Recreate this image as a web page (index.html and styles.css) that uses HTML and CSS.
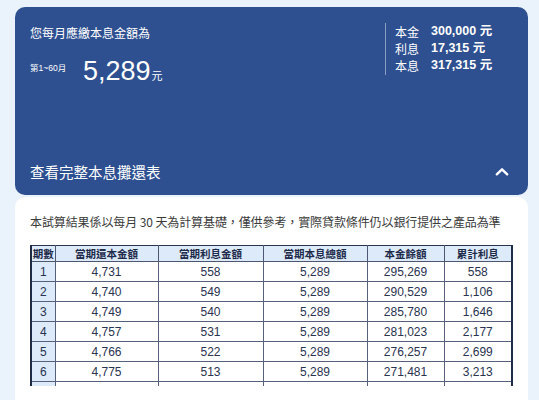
FILE: index.html
```html
<!DOCTYPE html>
<html lang="zh-Hant">
<head>
<meta charset="utf-8">
<link rel="stylesheet" href="styles.css">
</head>
<body>
<div class="page">
  <section class="summary">
    <div class="top">
      <div class="monthly">
        <div class="title">您每月應繳本息金額為</div>
        <div class="amount-row">
          <span class="period">第1~60月</span>
          <span class="amount-group"><span class="amount">5,289</span><span class="unit">元</span></span>
        </div>
      </div>
      <div class="totals">
        <div class="trow"><span class="lbl">本金</span><span class="val">300,000 元</span></div>
        <div class="trow"><span class="lbl">利息</span><span class="val">17,315 元</span></div>
        <div class="trow"><span class="lbl">本息</span><span class="val">317,315 元</span></div>
      </div>
    </div>
    <div class="toggle">
      <span class="toggle-text">查看完整本息攤還表</span>
      <svg class="chev" width="14" height="9" viewBox="0 0 14 9"><path d="M1.8 7.3 L7 2.3 L12.2 7.3" fill="none" stroke="#fff" stroke-width="2.4" stroke-linecap="round" stroke-linejoin="round"/></svg>
    </div>
  </section>
  <section class="detail">
    <p class="note">本試算結果係以每月 30 天為計算基礎，僅供參考，實際貸款條件仍以銀行提供之產品為準</p>
    <div class="table-wrap">
      <table class="sched">
        <colgroup>
          <col class="c1"><col class="c2"><col class="c3"><col class="c4"><col class="c5"><col class="c6">
        </colgroup>
        <thead>
          <tr><th>期數</th><th>當期還本金額</th><th>當期利息金額</th><th>當期本息總額</th><th>本金餘額</th><th>累計利息</th></tr>
        </thead>
        <tbody>
          <tr><td class="no">1</td><td>4,731</td><td>558</td><td>5,289</td><td>295,269</td><td>558</td></tr>
          <tr><td class="no">2</td><td>4,740</td><td>549</td><td>5,289</td><td>290,529</td><td>1,106</td></tr>
          <tr><td class="no">3</td><td>4,749</td><td>540</td><td>5,289</td><td>285,780</td><td>1,646</td></tr>
          <tr><td class="no">4</td><td>4,757</td><td>531</td><td>5,289</td><td>281,023</td><td>2,177</td></tr>
          <tr><td class="no">5</td><td>4,766</td><td>522</td><td>5,289</td><td>276,257</td><td>2,699</td></tr>
          <tr><td class="no">6</td><td>4,775</td><td>513</td><td>5,289</td><td>271,481</td><td>3,213</td></tr>
          <tr><td class="no">7</td><td>4,784</td><td>505</td><td>5,289</td><td>266,697</td><td>3,718</td></tr>
        </tbody>
      </table>
    </div>
  </section>
</div>
</body>
</html>
```
FILE: styles.css
```css
* { box-sizing: border-box; }
html, body { margin: 0; padding: 0; }
body {
  background: #eaf3fc;
  font-family: "Liberation Sans", "Noto Sans CJK TC", sans-serif;
  width: 539px;
  height: 400px;
  overflow: hidden;
}
.page {
  padding: 7px 11px 0 15px;
}
.summary {
  background: #2e5090;
  border-radius: 10px;
  height: 188px;
  padding: 17px 0 0 15px;
  display: flex;
  flex-direction: column;
  color: #fff;
}
.top {
  display: flex;
}
.monthly {
  flex: 1;
}
.title {
  font-size: 12px;
  line-height: 18px;
  font-family: "Noto Sans CJK TC", sans-serif;
}
.amount-row {
  display: flex;
  align-items: flex-start;
  margin-top: 15px;
}
.period {
  font-size: 8.5px;
  line-height: 12px;
  width: 53px;
  margin-top: 5px;
  font-family: "Liberation Sans", "Noto Sans CJK TC", sans-serif;
}
.amount-group {
  display: flex;
  align-items: baseline;
}
.amount {
  font-size: 27px;
  line-height: 28px;
}
.unit {
  font-size: 11px;
  margin-left: 1px;
  font-family: "Noto Sans CJK TC", sans-serif;
}
.totals {
  width: 143px;
  margin-top: -1px;
  border-left: 1px solid rgba(255,255,255,0.45);
  padding: 0 0 1px 9px;
  height: 52px;
}
.trow {
  display: flex;
  align-items: center;
  height: 17px;
}
.lbl {
  width: 36px;
  font-size: 12px;
  line-height: 17px;
  font-family: "Noto Sans CJK TC", sans-serif;
}
.val {
  font-size: 12.5px;
  line-height: 17px;
  font-weight: 700;
}
.toggle {
  margin-top: auto;
  height: 46px;
  display: flex;
  align-items: center;
  justify-content: space-between;
  padding-right: 19px;
  padding-bottom: 1px;
}
.toggle-text {
  font-size: 14.5px;
  font-family: "Noto Sans CJK TC", sans-serif;
}
.chev { display: block; }
.detail {
  background: #fff;
  margin-top: 2px;
  border-radius: 10px 10px 0 0;
  padding: 16px 15px 0 15px;
  height: 210px;
}
.note {
  margin: 0;
  font-size: 12px;
  line-height: 18px;
  letter-spacing: -0.1px;
  color: #3a3a3a;
  font-family: "Noto Sans CJK TC", sans-serif;
  white-space: nowrap;
}
.table-wrap {
  margin-top: 14px;
  width: 483px;
  height: 141px;
  overflow: hidden;
  border-left: 2px solid #1f2a47;
  border-right: 2px solid #1f2a47;
}
.sched {
  width: 100%;
  border-collapse: collapse;
  table-layout: fixed;
  color: #2a3350;
}
.c1 { width: 23px; }
.c2 { width: 103px; }
.c3 { width: 105px; }
.c4 { width: 104px; }
.c5 { width: 77px; }
.c6 { width: 67px; }
.sched th {
  background: #dceaf9;
  font-size: 10.5px;
  font-weight: 700;
  height: 16px;
  padding: 0;
  line-height: 14px;
  color: #1e2b4a;
  border: 1px solid #4d5672;
  border-top-color: #2a3350;
  font-family: "Noto Sans CJK TC", sans-serif;
}
.sched td {
  text-align: center;
  font-size: 12px;
  height: 20px;
  padding: 0;
  line-height: 18px;
  border: 1px solid #56607a;
}
.sched th:first-child, .sched td:first-child { border-left: 0; }
.sched th:last-child, .sched td:last-child { border-right: 0; }
.sched td.no {
  background: #dceaf9;
}
```
